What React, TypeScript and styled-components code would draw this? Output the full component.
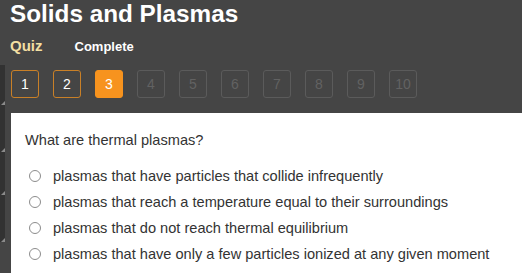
import React from 'react';
import styled, { createGlobalStyle } from 'styled-components';

const GlobalStyle = createGlobalStyle`
  html, body {
    margin: 0;
    padding: 0;
    background-color: #454545;
    font-family: "Liberation Sans", Arial, sans-serif;
  }
`;

type StepState = 'done' | 'current' | 'locked';

const steps: StepState[] = ['done', 'done', 'current', 'locked', 'locked', 'locked', 'locked', 'locked', 'locked', 'locked'];

const answers = [
  'plasmas that have particles that collide infrequently',
  'plasmas that reach a temperature equal to their surroundings',
  'plasmas that do not reach thermal equilibrium',
  'plasmas that have only a few particles ionized at any given moment',
];

// strip segments on the far left (cut-off resize handles)
const stripSegments = [40, 47, 43, 47];

const App: React.FC = () => {
  return (
    <>
      <GlobalStyle />
      <Page>
        <Header>
          <Title>Solids and Plasmas</Title>
          <SubRow>
            <QuizLabel>Quiz</QuizLabel>
            <Status>Complete</Status>
          </SubRow>
        </Header>

        <Body>
          <SideStrip>
            {stripSegments.map((h, i) => (
              <StripSegment key={i} style={{ height: h }} />
            ))}
          </SideStrip>

          <Main>
            <StepRow>
              {steps.map((state, i) => (
                <StepButton key={i} state={state}>
                  {i + 1}
                </StepButton>
              ))}
            </StepRow>

            <QuestionPanel>
              <Question>What are thermal plasmas?</Question>
              <AnswerList>
                {answers.map((a) => (
                  <AnswerRow key={a}>
                    <Radio />
                    <AnswerText>{a}</AnswerText>
                  </AnswerRow>
                ))}
              </AnswerList>
            </QuestionPanel>
          </Main>
        </Body>
      </Page>
    </>
  );
};

const Page = styled.div`
  width: 522px;
  height: 273px;
  overflow: hidden;
  background-color: #454545;
`;

const Header = styled.header`
  padding: 0 10px;
`;

const Title = styled.h1`
  margin: 0;
  font-size: 24.3px;
  line-height: 28px;
  font-weight: 700;
  color: #ffffff;
`;

const SubRow = styled.div`
  display: flex;
  align-items: baseline;
  gap: 32px;
  margin-top: 9px;
  height: 18px;
`;

const QuizLabel = styled.span`
  font-size: 15px;
  line-height: 18px;
  font-weight: 700;
  color: #f3dfa2;
`;

const Status = styled.span`
  font-size: 13px;
  line-height: 18px;
  font-weight: 700;
  color: #ffffff;
`;

const Body = styled.div`
  display: flex;
  margin-top: 10px;
`;

const SideStrip = styled.div`
  width: 5px;
  flex-shrink: 0;
  display: flex;
  flex-direction: column;
  align-self: flex-start;
  background-color: #323232;
`;

const StripSegment = styled.div`
  position: relative;
  &::after {
    content: '';
    position: absolute;
    right: 0;
    bottom: 0;
    width: 0;
    height: 0;
    border-left: 4px solid transparent;
    border-bottom: 4px solid #8a8a8a;
  }
`;

const Main = styled.div`
  flex: 1;
  margin-left: 6px;
  padding-top: 5px;
`;

const StepRow = styled.div`
  display: flex;
  gap: 14px;
`;

const StepButton = styled.div<{ state: StepState }>`
  box-sizing: border-box;
  width: 28px;
  height: 28px;
  display: flex;
  align-items: center;
  justify-content: center;
  border-radius: 3px;
  font-size: 14px;
  border: 1px solid
    ${(p) => (p.state === 'locked' ? '#5b5b5b' : p.state === 'current' ? '#f7931e' : '#c98027')};
  background-color: ${(p) => (p.state === 'current' ? '#f7931e' : 'transparent')};
  color: ${(p) => (p.state === 'locked' ? '#626262' : '#ffffff')};
`;

const QuestionPanel = styled.section`
  margin-top: 15px;
  background-color: #ffffff;
  padding: 19px 14px 20px;
  height: 200px;
`;

const Question = styled.p`
  margin: 0;
  font-size: 14.6px;
  line-height: 16px;
  color: #333333;
`;

const AnswerList = styled.div`
  margin-top: 15px;
  display: flex;
  flex-direction: column;
`;

const AnswerRow = styled.label`
  display: flex;
  align-items: center;
  height: 26px;
  padding-left: 4px;
  gap: 12px;
`;

const Radio = styled.span`
  box-sizing: border-box;
  width: 12px;
  height: 12px;
  border-radius: 50%;
  border: 1px solid #8c8c8c;
  background-color: #ffffff;
  flex-shrink: 0;
`;

const AnswerText = styled.span`
  font-size: 14.6px;
  line-height: 16px;
  color: #333333;
`;

export default App;
